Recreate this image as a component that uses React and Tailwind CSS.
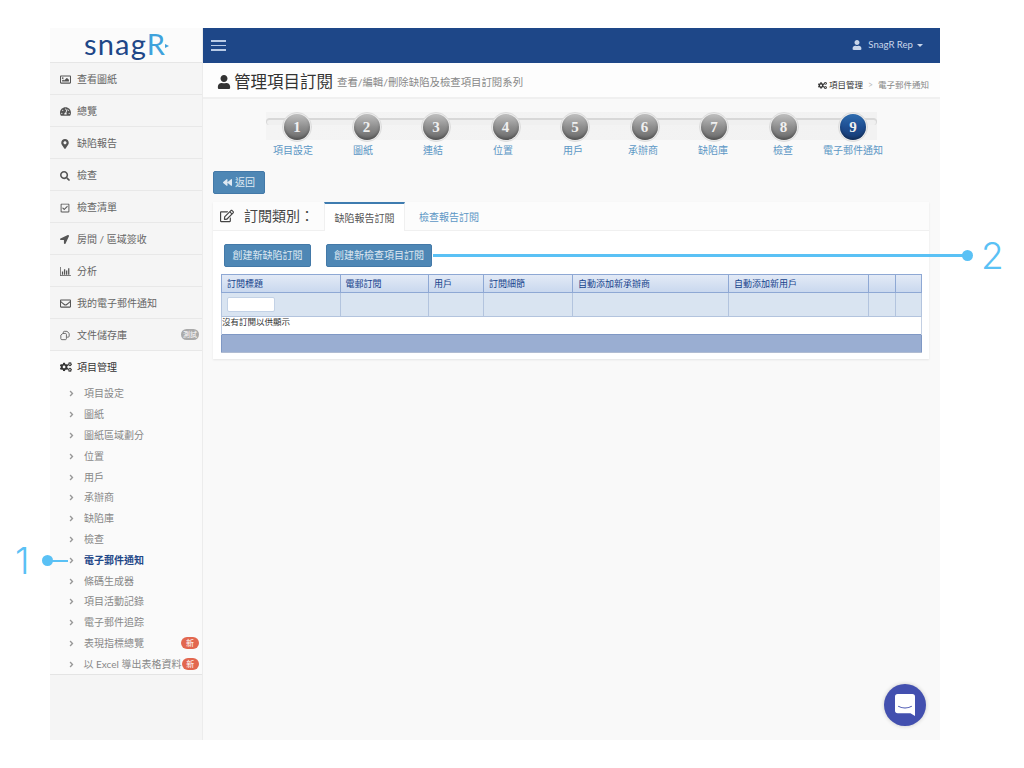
import React from "react";
import {
  FaRegImage,
  FaTachometerAlt,
  FaMapMarkerAlt,
  FaSearch,
  FaRegCheckSquare,
  FaLocationArrow,
  FaRegEnvelope,
  FaCogs,
  FaUser,
  FaRegEdit,
  FaBackward,
  FaAngleRight,
} from "react-icons/fa";

const BarsIcon = () => (
  <svg viewBox="0 0 12 10" className="w-[11px] h-[9px]" fill="currentColor">
    <path d="M0 0h.8v9.2H12v.8H0z" />
    <path d="M2 5h1.4v3.6H2zM4.3 2.5h1.4v6.1H4.3zM6.6 4h1.4v4.6H6.6zM8.9 1.5h1.4v7.1H8.9z" />
  </svg>
);

const FilesIcon = () => (
  <svg viewBox="0 0 12 12" className="w-[10px] h-[11px]" fill="none" stroke="currentColor" strokeWidth="1">
    <path d="M4 3.5V2.2C4 1.5 4.5 1 5.2 1h3.2L11 3.4v3.4c0 .7-.5 1.2-1.2 1.2H8.5" />
    <path d="M1 5.5 3.5 3.5H6.5c.7 0 1.2.5 1.2 1.2v5.1c0 .7-.5 1.2-1.2 1.2H2.2C1.5 11 1 10.500 1 9.800z" />
  </svg>
);

const menu = [
  { label: "查看圖紙", icon: <FaRegImage size={11} /> },
  { label: "總覽", icon: <FaTachometerAlt size={11} /> },
  { label: "缺陷報告", icon: <FaMapMarkerAlt size={10} /> },
  { label: "檢查", icon: <FaSearch size={10} /> },
  { label: "檢查清單", icon: <FaRegCheckSquare size={10} /> },
  { label: "房間 / 區域簽收", icon: <FaLocationArrow size={9} /> },
  { label: "分析", icon: <BarsIcon /> },
  { label: "我的電子郵件通知", icon: <FaRegEnvelope size={11} /> },
  { label: "文件儲存庫", icon: <FilesIcon />, beta: true },
];

const subMenu = [
  { label: "項目設定" },
  { label: "圖紙" },
  { label: "圖紙區域劃分" },
  { label: "位置" },
  { label: "用戶" },
  { label: "承辦商" },
  { label: "缺陷庫" },
  { label: "檢查" },
  { label: "電子郵件通知", active: true },
  { label: "條碼生成器" },
  { label: "項目活動記錄" },
  { label: "電子郵件追踪" },
  { label: "表現指標總覽", isNew: true },
  { label: "以 Excel 導出表格資料", isNew: true },
];

const steps = ["項目設定", "圖紙", "連結", "位置", "用戶", "承辦商", "缺陷庫", "檢查", "電子郵件通知"];

const columns = [
  { label: "訂閱標題", width: "w-[118.500px]" },
  { label: "電郵訂閱", width: "w-[88.500px]" },
  { label: "用戶", width: "w-[55px]" },
  { label: "訂閱細節", width: "w-[89px]" },
  { label: "自動添加新承辦商", width: "w-[156px]" },
  { label: "自動添加新用戶", width: "w-[140px]" },
  { label: "", width: "w-[27px]" },
  { label: "", width: "w-[26px]" },
];

const Sidebar = () => (
  <aside className="w-[153px] shrink-0 bg-[#f5f5f5] border-r border-[#ececec] text-[10px]">
    <div className="h-[35px] bg-[#fbfbfb] border-b border-[#e6e6e6] flex items-center justify-center pl-[1px]">
      <span className="font-['Lato',sans-serif] text-[29px] leading-[34px] tracking-[1.200px] text-[#1e4788] -mt-[3px]">
        snag<span className="text-[#3fa2dc]">R</span>
      </span>
      <svg viewBox="0 0 4 4" className="w-[4px] h-[4px] -ml-[1px] mt-[1px]">
        <path d="M0 0 4 2 0 4z" fill="#3fa2dc" />
      </svg>
    </div>
    {menu.map((item) => (
      <div key={item.label} className="h-[32px] flex items-center border-b border-[#e8e8e8] pl-[10px] pr-[3px] pt-[2px] text-[#666]">
        <span className="w-[17px] flex items-center text-[#555]">{item.icon}</span>
        <span className="flex-1">{item.label}</span>
        {item.beta && (
          <span className="h-[11px] w-[18px] mb-[3px] rounded-full bg-[#aaaaaa] text-white text-[7px] leading-[11px] text-center">測試</span>
        )}
      </div>
    ))}
    <div className="bg-[#fafafa] border-b border-[#e4e4e4]">
      <div className="h-[32px] flex items-center pl-[10px] text-[#333]">
        <span className="w-[17px] flex items-center"><FaCogs size={12} /></span>
        <span>項目管理</span>
      </div>
      {subMenu.map((item) => (
        <div key={item.label} className={`h-[20.800px] flex items-center pl-[17px] pr-[3px] pt-[1px] ${item.active ? "text-[#1e4788] font-bold" : "text-[#888]"}`}>
          <span className="w-[17px] text-[#999]"><FaAngleRight size={9} /></span>
          <span className="flex-1 whitespace-nowrap">{item.label}</span>
          {item.isNew && (
            <span className="h-[12px] w-[18px] rounded-full bg-[#e2674f] text-white text-[8px] leading-[12px] text-center">新</span>
          )}
        </div>
      ))}
    </div>
  </aside>
);

const Stepper = () => (
  <div className="pt-[16px]">
    <div className="relative ml-[63px] w-[611px] h-[28px] bg-[#f6f6f6] bg-gradient-to-r from-[#f4f4f4] to-[#f2f2f2]">
      <div className="absolute left-0 right-0 top-[6px] h-[7px] rounded-full bg-[#f0f0f0] border-t-2 border-[#d8d8d8] border-x border-x-[#d8d8d8]" />
      <div className="relative flex gap-[39.500px] pl-[16px] -mt-[3px]">
        {steps.map((label, i) => (
          <div
            key={label}
            className="w-[30px] h-[30px] shrink-0 rounded-full bg-[#ececec] border border-[#dcdcdc] flex items-center justify-center"
          >
            <div
              className={`w-[26px] h-[26px] rounded-full text-[#f0f0f0] font-bold text-[15px] leading-[26px] text-center font-['Liberation_Serif',serif] shadow-[inset_0_-2px_3px_rgba(0,0,0,0.25)] bg-gradient-to-b ${
                i === 8 ? "from-[#2f6db0] via-[#1e4e92] to-[#163a72]" : "from-[#c0c0c0] via-[#8f8f8f] to-[#6a6a6a]"
              }`}
            >
              {i + 1}
            </div>
          </div>
        ))}
      </div>
    </div>
    <div className="ml-[55px] mt-[3px] grid grid-cols-[repeat(9,70px)] text-[10px] leading-[14px] text-center text-[#5c97c5]">
      {steps.map((label) => (
        <span key={label} className="whitespace-nowrap">{label}</span>
      ))}
    </div>
  </div>
);

const SubscriptionTable = () => (
  <table className="mx-[8px] w-[700px] table-fixed border-collapse text-[9px] bg-white">
    <thead>
      <tr className="h-[18px] bg-gradient-to-b from-[#e3eaf6] to-[#c8d7ee] text-[#15428b]">
        {columns.map((col, i) => (
          <th key={i} className={`${col.width} border border-[#8ea8d4] text-left font-normal pl-[5px] whitespace-nowrap`}>
            {col.label}
          </th>
        ))}
      </tr>
    </thead>
    <tbody>
      <tr className="h-[24px] bg-[#d9e4f1]">
        {columns.map((col, i) => (
          <td key={i} className="border border-[#b3c4de] pl-[5px]">
            {i === 0 && <div className="w-[48px] h-[15px] bg-white border border-[#c3d2e6] rounded-[2px]" />}
          </td>
        ))}
      </tr>
      <tr className="h-[18px]">
        <td colSpan={8} className="align-top text-[8.500px] leading-[11px] text-[#333] border-x border-x-[#c3cfe2]">
          沒有訂閱以供顯示
        </td>
      </tr>
      <tr className="h-[18px] bg-[#9aaed2]">
        <td colSpan={8} className="border border-[#7f98c4] border-b-[#b0bcd2]" />
      </tr>
    </tbody>
  </table>
);

const App = () => (
  <div className="relative w-[1024px] h-[768px] overflow-hidden bg-white pt-[28px] pl-[50px] font-['Lato','Noto_Sans_CJK_TC',sans-serif]">
    <div className="w-[890px] h-[712px] flex bg-[#f9f9f9]">
      <Sidebar />
      <main className="flex-1 min-w-0">
        <header className="h-[35px] bg-[#1e4788] flex items-center justify-between pl-[8px] pr-[17px]">
          <div className="w-[15px] flex flex-col gap-[3px]">
            <span className="h-[1.500px] bg-[#b9cbe6]" />
            <span className="h-[1.500px] bg-[#b9cbe6]" />
            <span className="h-[1.500px] bg-[#b9cbe6]" />
          </div>
          <div className="flex items-center text-[9.600px] text-[#c9d6ea]">
            <FaUser size={10} />
            <span className="ml-[6px]">SnagR Rep</span>
            <span className="ml-[4px] mt-[1px] border-x-[3px] border-x-transparent border-t-[3px] border-t-[#c9d6ea]" />
          </div>
        </header>

        <div className="h-[36px] bg-[#fdfdfd] border-b-2 border-[#f0f0f0] flex items-center justify-between pl-[14px] pr-[11px]">
          <div className="flex items-center mt-[3px]">
            <FaUser size={14} className="text-[#333]" />
            <h1 className="ml-[3px] text-[16.500px] leading-[24px] font-normal text-[#333]">管理項目訂閱</h1>
            <span className="ml-[4px] mt-[3px] text-[10.400px] text-[#888]">查看/編輯/刪除缺陷及檢查項目訂閱系列</span>
          </div>
          <div className="flex items-center mt-[10px] text-[8.500px]">
            <FaCogs size={9} className="text-[#333]" />
            <span className="ml-[2px] text-[#333]">項目管理</span>
            <span className="mx-[5px] text-[#bbb]">&gt;</span>
            <span className="text-[#888]">電子郵件通知</span>
          </div>
        </div>

        <Stepper />

        <div className="pl-[10px] pr-[11px] pt-[14px]">
          <button className="w-[52px] h-[23px] bg-[#4e87b5] border border-[#4379a8] rounded-[2px] text-[#dfe9f2] text-[10px] flex items-center justify-center gap-[3px]">
            <FaBackward size={9} />
            返回
          </button>

          <section className="mt-[8px] h-[157px] bg-white shadow-[0_1px_2px_rgba(0,0,0,0.08)]">
            <div className="h-[29px] flex bg-[#fcfcfc] border-b border-[#f0f0f0]">
              <div className="w-[111px] flex items-center pl-[7px] text-[#444]">
                <FaRegEdit size={14} />
                <span className="ml-[10px] -mt-[1px] text-[14px]">訂閱類別：</span>
              </div>
              <div className="w-[81px] h-[29px] bg-white border-t-2 border-[#3f7cb0] border-x border-x-[#f0f0f0] text-[10px] text-[#555] text-center leading-[28px]">
                缺陷報告訂閱
              </div>
              <div className="pl-[14px] text-[10px] text-[#5c97c5] leading-[30px]">檢查報告訂閱</div>
            </div>
            <div className="flex gap-[15px] pl-[11px] pt-[13px] pb-[7px]">
              <button className="w-[87px] h-[23px] bg-[#4e87b5] border border-[#4379a8] rounded-[2px] text-[#dfe9f2] text-[10px]">創建新缺陷訂閱</button>
              <button className="w-[106px] h-[23px] bg-[#4e87b5] border border-[#4379a8] rounded-[2px] text-[#dfe9f2] text-[10px]">創建新檢查項目訂閱</button>
            </div>
            <SubscriptionTable />
          </section>
        </div>
      </main>
    </div>

    {/* callouts */}
    <span className="absolute left-[15px] top-[539px] text-[37px] leading-[44px] font-light text-[#5ac1f5] font-['Inter',sans-serif]">1</span>
    <span className="absolute left-[42px] top-[555px] w-[11px] h-[11px] rounded-full bg-[#5ac1f5]" />
    <span className="absolute left-[50px] top-[560px] w-[18px] h-[2px] bg-[#5ac1f5]" />
    <span className="absolute left-[433px] top-[254px] w-[532px] h-[3px] bg-[#5ac1f5]" />
    <span className="absolute left-[962px] top-[250px] w-[11px] h-[11px] rounded-full bg-[#5ac1f5]" />
    <span className="absolute left-[981px] top-[234px] text-[37px] leading-[44px] font-light text-[#5ac1f5] font-['Inter',sans-serif]">2</span>

    {/* chat launcher */}
    <div className="absolute left-[884px] top-[684px] w-[42px] h-[42px] rounded-full bg-[#4350af] flex items-center justify-center shadow-[0_0_4px_rgba(0,0,0,0.2)]">
      <svg viewBox="0 0 22 24" className="w-[20px] h-[22px]">
        <path d="M3 0h16a3 3 0 0 1 3 3v21l-5-3H3a3 3 0 0 1-3-3V3a3 3 0 0 1 3-3z" fill="#fff" />
        <path d="M4 13.500c4 2.500 10 2.500 14 0" fill="none" stroke="#4350af" strokeWidth="1.200" strokeLinecap="round" />
      </svg>
    </div>
  </div>
);

export default App;
